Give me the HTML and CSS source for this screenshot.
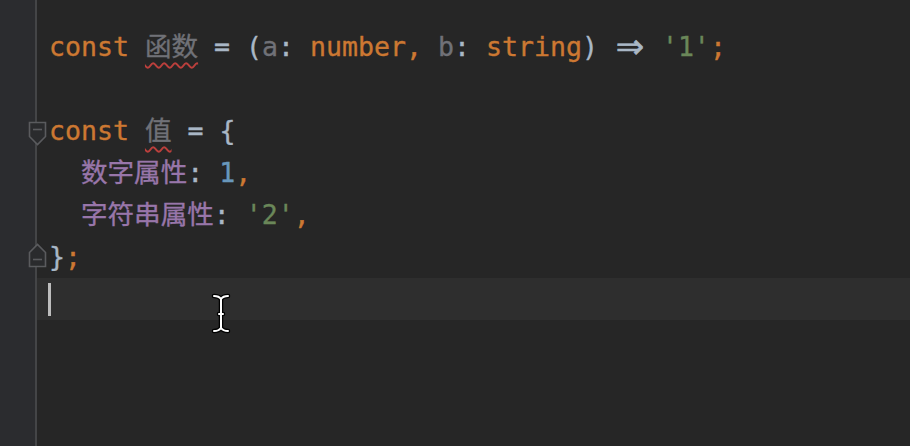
FILE: index.html
```html
<!DOCTYPE html>
<html>
<head>
<meta charset="utf-8">
<link rel="stylesheet" href="styles.css">
</head>
<body>
<div class="ide">
  <div class="gutter">
    <svg class="fold fold-open" width="20" height="26" viewBox="0 0 20 26">
      <path d="M1.5 1.5 H17.5 V15.5 L9.5 23.5 L1.5 15.5 Z" />
      <path d="M5 8.5 H14" />
    </svg>
    <svg class="fold fold-close" width="20" height="26" viewBox="0 0 20 26">
      <path d="M1.5 24.5 H17.5 V10.5 L9.5 2.5 L1.5 10.5 Z" />
      <path d="M5 17.5 H14" />
    </svg>
  </div>
  <div class="editor">
    <div class="line"><span class="kw">const </span><span class="unused err">函数</span><span class="op"> = (</span><span class="unused">a</span><span class="op">: </span><span class="kw">number, </span><span class="unused">b</span><span class="op">: </span><span class="kw">string</span><span class="op">) </span><span class="op lig">⇒</span><span class="op"> </span><span class="str">'1'</span><span class="kw">;</span></div>
    <div class="line"></div>
    <div class="line"><span class="kw">const </span><span class="unused err">值</span><span class="op"> = {</span></div>
    <div class="line"><span class="op">  </span><span class="prop">数字属性</span><span class="op">: </span><span class="num">1</span><span class="kw">,</span></div>
    <div class="line"><span class="op">  </span><span class="prop">字符串属性</span><span class="op">: </span><span class="str">'2'</span><span class="kw">,</span></div>
    <div class="line"><span class="op">}</span><span class="kw">;</span></div>
    <div class="line current"><span class="caret"></span></div>
    <div class="line"></div>
    <div class="line"></div>
  </div>
  <svg class="ibeam" width="20" height="42" viewBox="0 0 20 42">
    <g fill="none" stroke-linecap="round" stroke-linejoin="round">
      <path class="ib-out" d="M3 3 Q8 3 10 6 Q12 3 17 3 M10 6 V35 M3 38 Q8 38 10 35 Q12 38 17 38 M8 21 H12" />
      <path class="ib-in" d="M3 3 Q8 3 10 6 Q12 3 17 3 M10 6 V35 M3 38 Q8 38 10 35 Q12 38 17 38 M8 21 H12" />
    </g>
  </svg>
</div>
</body>
</html>
```

FILE: styles.css
```css
html, body {
  margin: 0;
  padding: 0;
  background: #262626;
}

.ide {
  position: relative;
  width: 910px;
  height: 446px;
  display: grid;
  grid-template-columns: 37px 1fr;
  overflow: hidden;
  font-family: "DejaVu Sans Mono", "Noto Sans CJK SC", monospace;
  font-size: 26.576px;
}

.gutter {
  position: relative;
  background: #2b2c2f;
  border-right: 2px solid #444547;
}

.fold {
  position: absolute;
  left: 28px;
  fill: #2a2b2d;
  stroke: #5a5b5e;
  stroke-width: 1.6;
}

.fold-open { top: 121px; }
.fold-close { top: 242px; }

.editor {
  padding-top: 26px;
  background: #262626;
  -webkit-text-stroke: 0.35px currentColor;
}

.line {
  height: 42px;
  line-height: 42px;
  padding-left: 12px;
  white-space: pre;
  color: #a9b7c6;
}

.line.current {
  background: #2e2e2e;
  display: flex;
  align-items: center;
}

.caret {
  display: block;
  width: 3px;
  height: 33px;
  background: #bdbdbd;
  margin-left: -1px;
}

.kw { color: #cc7832; }
.op { color: #a9b7c6; }
.unused { color: #707177; }
.str { color: #6a8759; }
.num { color: #6897bb; }
.prop { color: #9876aa; }

.err {
  text-decoration: underline wavy #bc3f3c;
  text-decoration-thickness: 1.5px;
  text-underline-offset: 6px;
}

.lig {
  display: inline-block;
  width: 32px;
  text-align: center;
  vertical-align: top;
  font-family: "DejaVu Sans", sans-serif;
  font-size: 34px;
  line-height: 40px;
  -webkit-text-stroke: 0.6px currentColor;
}

.ibeam {
  position: absolute;
  left: 211px;
  top: 293px;
}

.ib-out { stroke: #000; stroke-width: 4.5; }
.ib-in { stroke: #fff; stroke-width: 2; }
```
